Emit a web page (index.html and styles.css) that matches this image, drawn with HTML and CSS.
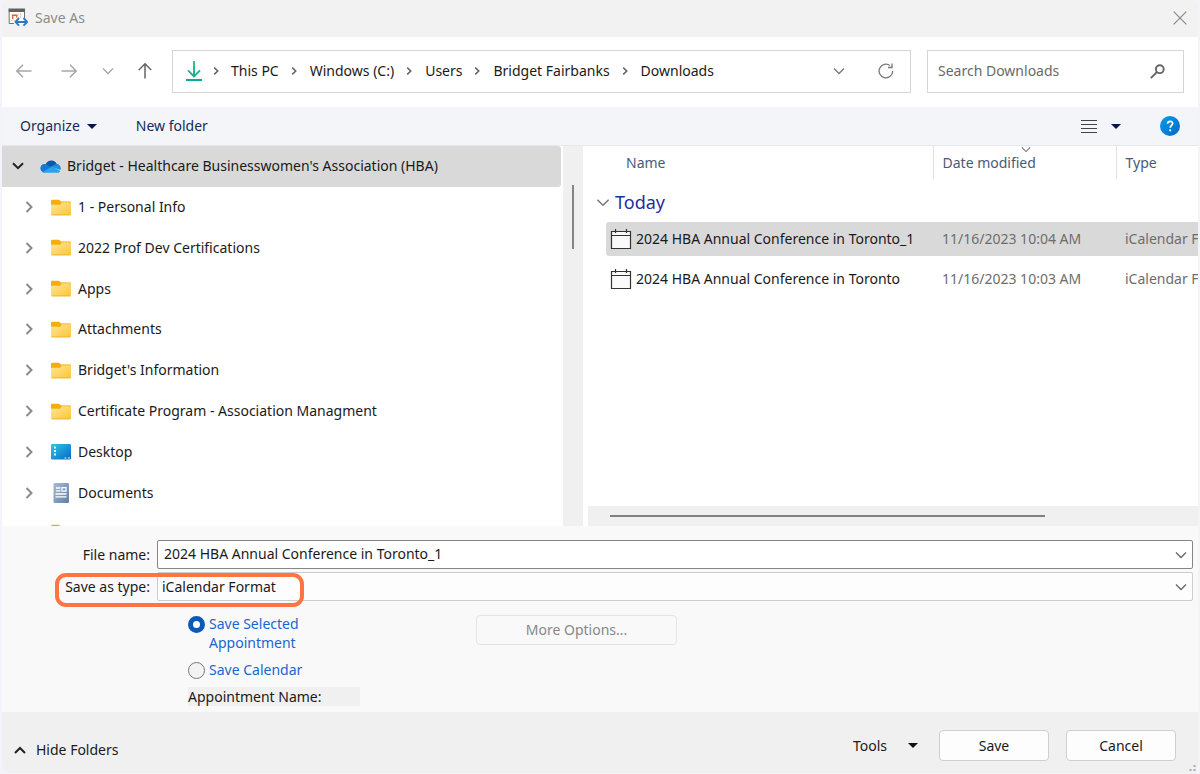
FILE: index.html
```html
<!DOCTYPE html>
<html lang="en">
<head>
<meta charset="utf-8">
<title>Save As</title>
<link rel="stylesheet" href="styles.css">
</head>
<body>
<svg class="defs" aria-hidden="true">
  <defs>
    <linearGradient id="gFolder" x1="0" y1="0" x2="1" y2="1"><stop offset="0" stop-color="#ffe59a"/><stop offset="1" stop-color="#fdc536"/></linearGradient>
    <linearGradient id="gDesk" x1="0" y1="0" x2="1" y2="1"><stop offset="0" stop-color="#2cc6e6"/><stop offset="1" stop-color="#0a68c4"/></linearGradient>
    <linearGradient id="gDoc" x1="0" y1="0" x2="1" y2="1"><stop offset="0" stop-color="#a9bdd3"/><stop offset="1" stop-color="#5f7fa6"/></linearGradient>
    <linearGradient id="gDown" x1="0" y1="0" x2="0" y2="20" gradientUnits="userSpaceOnUse"><stop offset="0" stop-color="#1cc880"/><stop offset="1" stop-color="#0aa896"/></linearGradient>
    <linearGradient id="gHelp" x1="0" y1="0" x2="1" y2="1"><stop offset="0" stop-color="#0b9be6"/><stop offset="1" stop-color="#0468c8"/></linearGradient>
    <symbol id="folder" viewBox="0 0 20 17"><path d="M0 2a1.300 1.300 0 0 1 1.300-1.300h6.200c.5 0 .9.200 1.200.5L10 2.600h8.700A1.300 1.300 0 0 1 20 3.900V8H0z" fill="#f6ad0c"/><path d="M10 2.600h8.700A1.300 1.300 0 0 1 20 3.900V8h-9z" fill="#fbcb52"/><path d="M0 5.800h8.300c.6 0 1-.2 1.400-.6l.9-1c.3-.3.700-.5 1.200-.5h6.900A1.300 1.300 0 0 1 20 5v10a1.300 1.300 0 0 1-1.300 1.300H1.300A1.300 1.300 0 0 1 0 15z" fill="url(#gFolder)"/><path d="M.5 15.900h19" stroke="#eeb42f" stroke-width=".9"/></symbol>
    <symbol id="right" viewBox="0 0 8 12"><path d="M1.500 1l5 5-5 5" fill="none" stroke="currentColor" stroke-width="2"/></symbol>
    <symbol id="crumb" viewBox="0 0 6 8"><path d="M1.200.7L4.700 4 1.200 7.300" fill="none" stroke="currentColor" stroke-width="1.600"/></symbol>
    <symbol id="down" viewBox="0 0 12 8"><path d="M1 1.500l5 5 5-5" fill="none" stroke="currentColor" stroke-width="1.300"/></symbol>
    <symbol id="tri" viewBox="0 0 10 5"><path d="M0 0h10L5 5z" fill="currentColor"/></symbol>
    <symbol id="cal" viewBox="0 0 22 22"><path d="M1.500 3.500h19v17h-19z" fill="#fafafa" stroke="#333" stroke-width="1.200"/><path d="M1.500 7.500h19M5.500 1v4M16.500 1v4" fill="none" stroke="#333" stroke-width="1.200"/></symbol>
  </defs>
</svg>
<main class="window">
  <header class="titlebar">
    <svg class="app-icon" viewBox="0 0 20 19"><path d="M1 1h16v15H1z" fill="#fff"/><path d="M.5.500h16.500v3.500H.5z" fill="#616161"/><path d="M1.200 4v11.500H6M16.500 4v6" fill="none" stroke="#707070"/><path d="M3 7h12M3 12.500h4M12.500 5v5" stroke="#c9c9c9" stroke-width=".8" stroke-dasharray="2 1"/><path d="M4.700 11V7.200h4V9.500" fill="none" stroke="#e0622d" stroke-width="1.400"/><path d="M11 10L7.500 14 11 17.700M15.500 10l3.700 4-3.700 3.700M8 14h11" fill="none" stroke="#2f78bd" stroke-width="1.900"/></svg>
    <span>Save As</span>
    <button class="close" aria-label="Close"><svg viewBox="0 0 14 14"><path d="M.7.7l12.600 12.600M13.300.7L.7 13.300" stroke="#8a8a8a" stroke-width="1.200"/></svg></button>
  </header>

  <nav class="navbar" aria-label="Location">
    <button class="nav-btn" aria-label="Back"><svg viewBox="0 0 16 14"><path d="M15.500 7H1M7 .8L.8 7 7 13.200" fill="none" stroke="#a6a6a6" stroke-width="1.500"/></svg></button>
    <button class="nav-btn forward" aria-label="Forward"><svg viewBox="0 0 16 14"><path d="M.5 7H15M9 .8L15.200 7 9 13.200" fill="none" stroke="#a6a6a6" stroke-width="1.500"/></svg></button>
    <button class="nav-btn recent" aria-label="Recent locations"><svg><use href="#down"/></svg></button>
    <button class="nav-btn parent" aria-label="Up"><svg class="up" viewBox="0 0 14 16"><path d="M7 15.500V1M.8 7L7 .8 13.200 7" fill="none" stroke="#666" stroke-width="1.500"/></svg></button>
    <div class="address">
      <svg class="dl" viewBox="0 0 16 20"><path d="M8 0v15M2 9.300l6 6 6-6M0 19h16" fill="none" stroke="url(#gDown)" stroke-width="1.900"/></svg>
      <svg class="sep"><use href="#crumb"/></svg><a href="#">This PC</a>
      <svg class="sep"><use href="#crumb"/></svg><a href="#">Windows (C:)</a>
      <svg class="sep"><use href="#crumb"/></svg><a href="#">Users</a>
      <svg class="sep"><use href="#crumb"/></svg><a href="#">Bridget Fairbanks</a>
      <svg class="sep"><use href="#crumb"/></svg><a href="#">Downloads</a>
      <button class="addr-btn" aria-label="Previous locations"><svg class="chev"><use href="#down"/></svg></button>
      <button class="addr-btn" aria-label="Refresh"><svg class="refresh" viewBox="0 0 16 16"><path d="M14.700 8A6.800 6.800 0 1 1 12 2.600M14 .5v4H10" fill="none" stroke="#777" stroke-width="1.300"/></svg></button>
    </div>
    <div class="search">
      <input type="search" aria-label="Search Downloads" placeholder="Search Downloads">
      <svg viewBox="0 0 15 15"><circle cx="9.800" cy="5.200" r="3.900" fill="none" stroke="#666" stroke-width="1.900"/><path d="M7 8L.8 14.200" stroke="#666" stroke-width="1.900"/></svg>
    </div>
  </nav>

  <div class="toolbar">
    <button>Organize <svg class="tri"><use href="#tri"/></svg></button>
    <button>New folder</button>
    <button class="view" aria-label="View"><svg class="lines" viewBox="0 0 16 14"><path d="M0 1.500h16M0 5.500h16M0 9.500h16M0 13.500h16" stroke="#444"/></svg><svg class="tri"><use href="#tri"/></svg></button>
    <button class="help" aria-label="Help"><svg viewBox="0 0 20 20"><circle cx="10" cy="10" r="10" fill="url(#gHelp)"/><path d="M7.600 7.800c0-1.600 1-2.500 2.500-2.500s2.500.9 2.500 2.200c0 1.900-2.400 1.900-2.400 4.300" fill="none" stroke="#fff" stroke-width="1.700"/><circle cx="10.200" cy="14.300" r="1.100" fill="#fff"/></svg></button>
  </div>

  <div class="panes">
    <div class="sidebar">
      <ul class="tree">
        <li class="root"><svg class="exp" viewBox="0 0 12 8"><path d="M1 1.200l5 5 5-5" fill="none" stroke="#222" stroke-width="2"/></svg><svg class="cloud" viewBox="0 0 21 13"><path d="M5.500 5.200A6 6 0 0 1 16.800 4l-4 5z" fill="#0a57ae"/><path d="M4.800 12.500A4.300 4.300 0 1 1 6.500 4.300L15 9.500z" fill="#1178d3"/><path d="M11 6.500l5.500-2.700a4.400 4.400 0 0 1 3.800 6.200z" fill="#1b8ee0"/><path d="M2.500 12l9-5.200c.7-.3 1.200-.2 1.800.1l7 4c-.6 1.300-1.800 1.900-3.300 1.900H4.800c-1 0-1.800-.3-2.300-.8z" fill="#2aa3ea"/></svg><span>Bridget - Healthcare Businesswomen's Association (HBA)</span></li>
        <li><svg class="arr"><use href="#right"/></svg><svg class="ico"><use href="#folder"/></svg><span>1 - Personal Info</span></li>
        <li><svg class="arr"><use href="#right"/></svg><svg class="ico"><use href="#folder"/></svg><span>2022 Prof Dev Certifications</span></li>
        <li><svg class="arr"><use href="#right"/></svg><svg class="ico"><use href="#folder"/></svg><span>Apps</span></li>
        <li><svg class="arr"><use href="#right"/></svg><svg class="ico"><use href="#folder"/></svg><span>Attachments</span></li>
        <li><svg class="arr"><use href="#right"/></svg><svg class="ico"><use href="#folder"/></svg><span>Bridget's Information</span></li>
        <li><svg class="arr"><use href="#right"/></svg><svg class="ico"><use href="#folder"/></svg><span>Certificate Program - Association Managment</span></li>
        <li><svg class="arr"><use href="#right"/></svg><svg class="ico" viewBox="0 0 20 17"><rect y="1" width="20" height="15.500" rx="1.200" fill="url(#gDesk)"/><path d="M3 3.500h2v2H3zM3 7h2v2H3zM3 10.500h2v2H3zM13.500 14.500h2v1h-2zM17 14.500h2v1h-2z" fill="#e4f8fd"/></svg><span>Desktop</span></li>
        <li><svg class="arr"><use href="#right"/></svg><svg class="ico tall" viewBox="0 0 20 20"><rect x="2.500" width="15.500" height="20" rx="1.200" fill="url(#gDoc)"/><path d="M5 5h4.500M5 7.800h4.500M4.500 11h11M4.500 13.800h11" stroke="#fff" stroke-width="1.300"/><path d="M11 4.600h4v3.600h-4z" fill="none" stroke="#fff" stroke-width="1.200"/></svg><span>Documents</span></li>
        <li class="peek"><svg class="ico"><use href="#folder"/></svg></li>
      </ul>
      <div class="vscroll"><div class="vthumb"></div></div>
    </div>
    <div class="files">
      <div class="table-wrap">
        <table>
          <colgroup><col class="c-name"><col class="c-date"><col class="c-type"></colgroup>
          <thead><tr><th>Name</th><th class="sorted"><svg><use href="#down"/></svg>Date modified</th><th>Type</th></tr></thead>
          <tbody>
            <tr class="group"><th colspan="3"><div><svg><use href="#down"/></svg>Today</div></th></tr>
            <tr class="selected"><td><div class="name"><svg><use href="#cal"/></svg>2024 HBA Annual Conference in Toronto_1</div></td><td><div>11/16/2023 10:04 AM</div></td><td><div>iCalendar File</div></td></tr>
            <tr><td><div class="name"><svg><use href="#cal"/></svg>2024 HBA Annual Conference in Toronto</div></td><td><div>11/16/2023 10:03 AM</div></td><td><div>iCalendar File</div></td></tr>
          </tbody>
        </table>
      </div>
      <div class="hscroll"><div class="hthumb"></div></div>
    </div>
  </div>

  <form class="form">
    <div class="field">
      <label for="fname">File name:</label>
      <div class="combo file"><input id="fname" type="text" value="2024 HBA Annual Conference in Toronto_1"><svg><use href="#down"/></svg></div>
    </div>
    <div class="field">
      <label for="ftype">Save as type:</label>
      <div class="combo type"><select id="ftype"><option>iCalendar Format</option></select><svg><use href="#down"/></svg></div>
      <div class="highlight"></div>
    </div>
    <div class="options">
      <div class="radios">
        <label><input type="radio" name="scope" checked><span>Save Selected Appointment</span></label>
        <label><input type="radio" name="scope"><span>Save Calendar</span></label>
        <div class="appt">Appointment Name:</div>
      </div>
      <button type="button" class="more" disabled>More Options...</button>
    </div>
  </form>

  <footer class="footer">
    <button class="hide"><svg viewBox="0 0 12 8"><path d="M1 7l5-5 5 5" fill="none" stroke="#222" stroke-width="2"/></svg>Hide Folders</button>
    <button class="tools">Tools <svg class="tri"><use href="#tri"/></svg></button>
    <button class="push">Save</button>
    <button class="push">Cancel</button>
    <svg class="grip" viewBox="0 0 7 7"><path d="M4.500 0h2v2h-2zM4.500 4h2v2h-2zM.5 4h2v2h-2z" fill="#aaa"/></svg>
  </footer>
</main>
</body>
</html>
```
FILE: styles.css
```css
* { box-sizing: border-box; }
body {
  margin: 0;
  background: #f3f3f9;
  font: 14px/20px "Noto Sans", "Open Sans", sans-serif;
  color: #1a1a1a;
}
button, input, select { font: inherit; color: inherit; }
button { border: 0; padding: 0; background: none; display: flex; align-items: center; }
svg { display: block; flex: none; }
.defs { position: absolute; width: 0; height: 0; }

.window {
  display: flex;
  flex-direction: column;
  height: 100vh;
  padding: 0 2px 1px;
  border-radius: 10px;
  overflow: hidden;
}

.titlebar {
  display: flex;
  align-items: center;
  height: 37px;
  padding: 0 11px 2px 6px;
  background: #f2f2f2;
  color: #8c8c8c;
  flex: none;
}
.app-icon { width: 20px; height: 19px; margin-right: 7px; }
.close { margin-left: auto; }
.close svg { width: 14px; height: 14px; }

.navbar {
  display: flex;
  align-items: center;
  height: 70px;
  padding: 0 14px 2px;
  background: #fff;
  flex: none;
}
.nav-btn { justify-content: center; width: 16px; margin-right: 29px; color: #a6a6a6; }
.nav-btn svg { width: 16px; height: 14px; }
.nav-btn.forward { margin-right: 25px; }
.nav-btn.recent { width: 12px; margin-right: 23px; }
.nav-btn.recent svg { width: 12px; height: 8px; }
.nav-btn .up { width: 14px; height: 16px; }
.nav-btn.parent { margin-right: 19px; }
.address {
  display: flex;
  align-items: center;
  flex: 1;
  height: 43px;
  margin-right: 16px;
  padding: 0 16px 0 13px;
  border: 1px solid #d5d5d5;
}
.dl { width: 16px; height: 20px; }
.sep { width: 6px; height: 8px; margin: 0 12px 0 11px; color: #666; }
.sep ~ .sep { margin: 0 13px 0 12px; }
.address a { color: #1a1a1a; text-decoration: none; }
.addr-btn { color: #777; }
.addr-btn + .addr-btn { margin-left: 33px; }
.address a + .addr-btn { margin-left: auto; }
.chev { width: 12px; height: 8px; }
.refresh { width: 16px; height: 16px; }
.search {
  display: flex;
  align-items: center;
  width: 257px;
  height: 43px;
  padding: 0 18px 0 10px;
  border: 1px solid #d5d5d5;
}
.search input { flex: 1; min-width: 0; padding: 0; border: 0; outline: 0; background: none; }
.search input::placeholder { color: #6a6a6a; opacity: 1; }
.search svg { width: 15px; height: 15px; }

.toolbar {
  display: flex;
  align-items: center;
  height: 39px;
  padding: 0 18px;
  background: #f3f5f8;
  border-bottom: 1px solid #e6e8ea;
  color: #142c5c;
  flex: none;
}
.tri { width: 10px; height: 5px; margin-left: 7px; color: #0a1546; }
.toolbar button + button { margin-left: 39px; }
.toolbar .view { margin-left: auto; }
.view .tri { margin-left: 14px; }
.lines { width: 16px; height: 14px; }
.help svg { width: 20px; height: 20px; }

.panes { display: flex; flex: 1; min-height: 0; background: #fff; }
.sidebar { display: flex; width: 581px; flex: none; }
.tree {
  display: grid;
  grid-template-rows: repeat(9, 1fr) 13px;
  flex: 1;
  min-height: 0;
  margin: 0 2px 0 0;
  padding: 0;
  list-style: none;
  overflow: hidden;
}
.tree li { display: flex; align-items: center; padding-left: 22px; }
.tree .root { padding-left: 10px; background: #d9d9d9; border-radius: 0 3px 3px 0; }
.exp { width: 12px; height: 8px; }
.cloud { width: 21px; height: 13px; margin: 0 6px 0 16px; }
.arr { width: 8px; height: 12px; margin: 0 18px 0 1px; color: #8a8a8a; }
.ico { width: 20px; height: 17px; margin-right: 7px; }
.ico.tall { height: 20px; }
.tree .peek { align-items: flex-start; padding: 11px 0 0 49px; }
.vscroll { width: 20px; padding: 39px 0 0 9px; background: #f0f0f0; }
.vthumb { width: 2px; height: 64px; background: #858585; }

.files {
  display: flex;
  flex-direction: column;
  flex: 1;
  min-width: 0;
  margin-left: 3px;
  padding-left: 2px;
  background: #fff;
}
.table-wrap { flex: 1; overflow: hidden; }
table { width: 100%; table-layout: fixed; border-collapse: collapse; white-space: nowrap; }
.c-name { width: 345px; }
.c-date { width: 183px; }
th, td { padding: 0; text-align: left; font-weight: 400; overflow: hidden; }
thead th { position: relative; height: 33px; padding-left: 9px; color: #4a5a78; border-right: 1px solid #e2e2e2; }
thead th:first-child { padding-left: 38px; }
thead th:last-child { border-right: 0; }
.sorted svg { position: absolute; top: 0; left: 48%; width: 10px; height: 7px; color: #777; }
.group div { display: flex; align-items: center; gap: 5px; height: 40px; padding: 6px 0 0 8px; font-size: 18px; color: #1f2f9a; }
.group svg { width: 14px; height: 9px; color: #777; }
td { height: 40px; color: #6d6d6d; }
td div { display: flex; align-items: center; height: 34px; padding-left: 9px; }
td .name { gap: 4px; margin-left: 18px; padding-left: 4px; color: #1a1a1a; border-radius: 3px 0 0 3px; }
td svg { width: 22px; height: 22px; }
.selected div { background: #d9d9d9; }
.hscroll { height: 20px; padding: 9px 153px 0 22px; background: #f0f0f0; }
.hthumb { height: 2px; background: #808080; }

.form { display: flex; flex-direction: column; gap: 3px; padding: 14px 5px 6px 0; background: #f9f9f9; flex: none; }
.field { position: relative; display: flex; align-items: center; }
.field label { width: 148px; margin-right: 7px; text-align: right; }
.combo { position: relative; display: flex; flex: 1; height: 29px; }
.combo input, .combo select {
  width: 100%;
  height: 100%;
  padding: 0 28px 2px 6px;
  border: 1px solid #868686;
  border-radius: 2px;
  background: #fff;
  outline: 0;
  appearance: none;
}
.combo select { padding: 0 28px 0 4px; border-color: #cdcdcd; background: #fdfdfd; }
.combo svg { position: absolute; right: 6px; top: 11px; width: 12px; height: 8px; color: #666; pointer-events: none; }
.highlight {
  position: absolute;
  left: 53px;
  top: 1px;
  width: 249px;
  height: 34px;
  border: 4px solid #ff7442;
  border-radius: 11px;
  pointer-events: none;
}
.options { display: flex; align-items: flex-start; gap: 116px; padding: 10px 0 0 186px; }
.radios { display: flex; flex-direction: column; gap: 8px; width: 172px; line-height: 19px; color: #1a66cf; }
.radios label { display: flex; align-items: flex-start; gap: 4px; }
.radios span { width: 110px; }
.radios input {
  appearance: none;
  flex: none;
  width: 17px;
  height: 17px;
  margin: 2px 0 0;
  border: 1px solid #777;
  border-radius: 50%;
  background: #f3f3f3;
}
.radios input:checked { border: 5px solid #0a5ab8; background: #fff; }
.appt { background: #f0f0f0; color: #1a1a1a; }
.more {
  justify-content: center;
  width: 201px;
  height: 30px;
  margin-top: 1px;
  border: 1px solid #e4e4e4;
  border-radius: 4px;
  background: #f9f9f9;
  color: #888;
}

.footer {
  position: relative;
  display: flex;
  align-items: center;
  height: 61px;
  padding: 0 22px 0 12px;
  background: #f0f0f0;
  border-radius: 0 0 9px 9px;
  flex: none;
}
.hide { gap: 10px; margin: 14px auto 0 0; }
.hide svg { width: 12px; height: 8px; }
.tools { margin: 6px 21px 0 0; }
.tools .tri { margin-left: 21px; color: #111; }
.push {
  justify-content: center;
  width: 110px;
  height: 31px;
  margin: 6px 0 0;
  border: 1px solid #cfcfcf;
  border-radius: 4px;
  background: #fdfdfd;
}
.push + .push { margin-left: 17px; }
.grip { position: absolute; right: 2px; bottom: 1px; width: 7px; height: 7px; }
```
